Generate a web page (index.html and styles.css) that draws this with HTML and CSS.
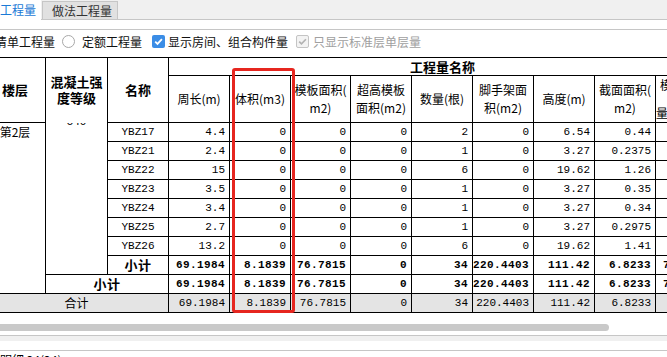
FILE: index.html
```html
<!DOCTYPE html>
<html lang="zh-CN">
<head>
  <meta charset="UTF-8" />
  <title>工程量</title>
  <link rel="stylesheet" href="styles.css">
</head>
<body>
  <div class="tabs">
    <div class="tab-active">工程量</div>
    <div class="tab">做法工程量</div>
  </div>
  <div class="gap"></div>

  <div class="toolbar">
    <span>清单工程量</span>
    <span class="radio"></span>
    <span class="lbl">定额工程量</span>
    <span class="check on"><svg width="11" height="11" viewBox="0 0 11 11"><path d="M2.2 5.6 L4.5 7.9 L8.9 3.2" fill="none" stroke="#fff" stroke-width="1.8"/></svg></span>
    <span class="lbl-s">显示房间、组合构件量</span>
    <span class="check off"><svg width="11" height="11" viewBox="0 0 11 11"><path d="M2.2 5.6 L4.5 7.9 L8.9 3.2" fill="none" stroke="#b2b2b2" stroke-width="1.6"/></svg></span>
    <span class="lbl-d">只显示标准层单层量</span>
  </div>

  <div class="grid-wrap">
    <table class="grid">
      <colgroup>
        <col class="c"><col class="c2"><col class="c"><col class="c"><col class="c"><col class="c6">
        <col class="c"><col class="c"><col class="c"><col class="c"><col class="c"><col class="c">
      </colgroup>
      <tr class="h1">
        <th rowspan="2">楼层</th>
        <th rowspan="2" class="two">混凝土强<br>度等级</th>
        <th rowspan="2">名称</th>
        <th colspan="9">工程量名称</th>
      </tr>
      <tr class="h2">
        <th class="sub">周长(m)</th>
        <th class="sub">体积(m3)</th>
        <th class="sub">模板面积(<br>m2)</th>
        <th class="sub">超高模板<br>面积(m2)</th>
        <th class="sub">数量(根)</th>
        <th class="sub">脚手架面<br>积(m2)</th>
        <th class="sub">高度(m)</th>
        <th class="sub">截面面积(<br>m2)</th>
        <th class="sub tall">模板超高(<br>m2)<br>量体积(m3)</th>
      </tr>
      <tr>
        <td rowspan="9" class="floor">第2层</td>
        <td rowspan="8" class="grade"><div class="cut"><span>C40</span></div></td>
        <td class="name">YBZ17</td>
        <td>4.4</td><td>0</td><td>0</td><td>0</td><td>2</td><td>0</td><td>6.54</td><td>0.44</td><td>0</td>
      </tr>
      <tr>
        <td class="name">YBZ21</td>
        <td>2.4</td><td>0</td><td>0</td><td>0</td><td>1</td><td>0</td><td>3.27</td><td>0.2375</td><td>0</td>
      </tr>
      <tr>
        <td class="name">YBZ22</td>
        <td>15</td><td>0</td><td>0</td><td>0</td><td>6</td><td>0</td><td>19.62</td><td>1.26</td><td>0</td>
      </tr>
      <tr>
        <td class="name">YBZ23</td>
        <td>3.5</td><td>0</td><td>0</td><td>0</td><td>1</td><td>0</td><td>3.27</td><td>0.35</td><td>0</td>
      </tr>
      <tr>
        <td class="name">YBZ24</td>
        <td>3.4</td><td>0</td><td>0</td><td>0</td><td>1</td><td>0</td><td>3.27</td><td>0.34</td><td>0</td>
      </tr>
      <tr>
        <td class="name">YBZ25</td>
        <td>2.7</td><td>0</td><td>0</td><td>0</td><td>1</td><td>0</td><td>3.27</td><td>0.2975</td><td>0</td>
      </tr>
      <tr>
        <td class="name">YBZ26</td>
        <td>13.2</td><td>0</td><td>0</td><td>0</td><td>6</td><td>0</td><td>19.62</td><td>1.41</td><td>0</td>
      </tr>
      <tr class="sum">
        <td class="label">小计</td>
        <td>69.1984</td><td>8.1839</td><td>76.7815</td><td>0</td><td>34</td><td>220.4403</td><td>111.42</td><td>6.8233</td><td>72.4812</td>
      </tr>
      <tr class="sum">
        <td colspan="2" class="label">小计</td>
        <td>69.1984</td><td>8.1839</td><td>76.7815</td><td>0</td><td>34</td><td>220.4403</td><td>111.42</td><td>6.8233</td><td>72.4812</td>
      </tr>
      <tr class="total">
        <td colspan="3" class="label">合计</td>
        <td>69.1984</td><td>8.1839</td><td>76.7815</td><td>0</td><td>34</td><td>220.4403</td><td>111.42</td><td>6.8233</td><td>72.48</td>
      </tr>
    </table>
  </div>

  <div class="hscroll"><div class="thumb"></div></div>
  <div class="split"></div>
  <div class="detail">明细 24(24)</div>

  <div class="mark"></div>
</body>
</html>
```

FILE: styles.css
```css
body {
  margin: 0;
  width: 667px;
  height: 357px;
  overflow: hidden;
  font-family: "Noto Sans CJK SC", sans-serif;
  font-size: 12px;
  color: #000;
  background: #fff;
}
.tabs {
  display: flex;
  align-items: flex-end;
  height: 19px;
  background: #f0f0f0;
  border-bottom: 1px solid #c6c6c6;
}
.tab-active {
  width: 41px;
  height: 20px;
  margin-bottom: -1px;
  background: #fff;
  color: #1c7ad6;
  line-height: 19px;
  white-space: nowrap;
}
.tab {
  height: 17px;
  margin-left: 1px;
  padding: 0 5px 0 9px;
  background: #e1e1e1;
  border: 1px solid #c6c6c6;
  border-bottom: none;
  line-height: 17px;
  color: #333;
  white-space: nowrap;
}
.gap {
  height: 9px;
  border-bottom: 1px solid #c6c6c6;
}
.toolbar {
  display: flex;
  align-items: center;
  height: 22px;
  margin-left: -5px;
  margin-bottom: 5px;
  white-space: nowrap;
  color: #111;
}
.radio {
  width: 11px;
  height: 11px;
  margin-left: 7px;
  border: 1px solid #a8a8a8;
  border-radius: 50%;
  background: #fff;
}
.lbl { margin-left: 7px; }
.check {
  display: flex;
  align-items: center;
  justify-content: center;
  box-sizing: border-box;
  width: 13px;
  height: 13px;
  border-radius: 2px;
}
.check.on {
  margin-left: 10px;
  background: #3b8de6;
}
.check.off {
  margin-left: 8px;
  background: #f3f3f3;
  border: 1px solid #c4c4c4;
}
.lbl-s { margin-left: 3px; }
.lbl-d { margin-left: 4px; color: #a0a0a0; }

.grid-wrap {
  overflow: hidden;
}
.grid {
  margin-left: -16px;
  border-collapse: collapse;
  table-layout: fixed;
  width: 732px;
}
.grid col.c { width: 61px; }
.grid col.c2 { width: 62px; }
.grid col.c6 { width: 60px; }
.grid th, .grid td {
  border: 1px solid #000;
  padding: 0;
  overflow: hidden;
  white-space: nowrap;
}
.grid th {
  font-size: 13px;
  font-weight: bold;
  text-align: center;
}
.grid tr.h1 { height: 18px; }
.grid tr.h1 th { line-height: 16px; }
.grid tr.h2 { height: 47px; }
.grid th.two { line-height: 13px; }
.grid th.sub {
  font-size: 12px;
  font-weight: normal;
  line-height: 18px;
}
.grid th.tall {
  line-height: 14px;
}
.grid td {
  height: 18px;
  line-height: 18px;
  font-family: "Liberation Mono", monospace;
  font-size: 11px;
  text-align: right;
  padding-right: 4px;
}
.grid td.name {
  text-align: center;
  padding-right: 0;
}
.grid td.floor {
  vertical-align: top;
  text-align: center;
  padding-right: 0;
  font-family: "Noto Sans CJK SC", sans-serif;
  font-size: 12px;
}
.grid td.grade {
  vertical-align: top;
  border-top-style: hidden;
  padding-right: 0;
}
.cut {
  height: 3px;
  overflow: hidden;
  text-align: center;
  line-height: 10px;
}
.cut span {
  display: block;
  margin-top: -6px;
}
.grid tr.sum td {
  font-weight: bold;
  letter-spacing: 0.4px;
}
.grid td.label {
  text-align: center;
  padding-right: 0;
  font-family: "Noto Sans CJK SC", sans-serif;
  font-size: 13px;
  letter-spacing: 0;
}
.grid tr.total td {
  background: #e4e4e4;
}
.grid tr.total td.label {
  font-size: 12px;
  font-weight: normal;
}

.hscroll {
  height: 7px;
  margin-top: 11px;
}
.thumb {
  width: 609px;
  height: 7px;
  border-radius: 0 4px 4px 0;
  background: #c9c9c9;
}
.split {
  height: 5px;
  margin-top: 4px;
  background: #f0f0f0;
  border-top: 1px solid #c6c6c6;
  padding-bottom: 9px;
  background-clip: content-box;
  border-bottom: 1px solid #c6c6c6;
}
.detail {
  padding-top: 2px;
  line-height: 14px;
  white-space: nowrap;
}
.mark {
  position: absolute;
  left: 232px;
  top: 68px;
  width: 63px;
  height: 245px;
  box-sizing: border-box;
  border: 3px solid #e6261f;
  border-radius: 3px;
}
```
